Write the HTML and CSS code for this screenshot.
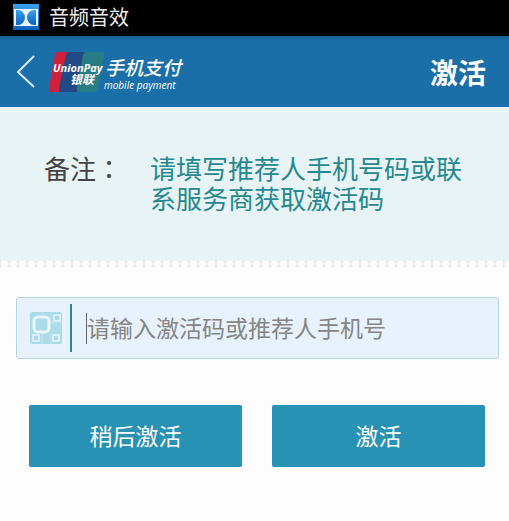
FILE: index.html
```html
<!DOCTYPE html>
<html lang="zh-CN">

<head>
    <meta charset="UTF-8" />
    <meta name="viewport" content="width=device-width, initial-scale=1.0" />
    <title>激活</title>
    <link rel="stylesheet" href="styles.css">
</head>

<body>
    <!-- 状态栏 -->
    <div class="status">
        <svg class="status-icon" viewBox="0 0 26 26" aria-hidden="true">
            <defs>
                <linearGradient id="blue" x1="0" y1="0" x2="0" y2="1">
                    <stop offset="0" stop-color="#3aa0f0" />
                    <stop offset="1" stop-color="#0a62bc" />
                </linearGradient>
            </defs>
            <rect width="26" height="26" fill="url(#blue)" />
            <rect x="1" y="5" width="24" height="17" fill="#e8f4ff" />
            <path d="M3 6h2a7 7.500 0 0 1 0 15H3z" fill="url(#blue)" />
            <path d="M23 6h-2a7 7.500 0 0 0 0 15h2z" fill="url(#blue)" />
        </svg>
        <span>音频音效</span>
    </div>

    <!-- 顶部导航 -->
    <header class="header">
        <a class="back" href="#" aria-label="返回">
            <svg viewBox="0 0 20 34" aria-hidden="true">
                <path d="M17 1L1 17l16 15" fill="none" stroke="#d9ecf8" stroke-width="2" />
            </svg>
        </a>
        <svg class="logo" viewBox="0 0 140 44" role="img" aria-label="UnionPay 银联 手机支付">
            <path d="M10 2h14l-8 40H3q-3 0-2-4L7 5q1-3 3-3z" fill="#d0203c" />
            <path d="M21 2h18l-8 40H13q-3 0-2-4l7-33q1-3 3-3z" fill="#234a86" />
            <path d="M38 2h16q3 0 2 4l-6 33q-1 3-3 3H31q-3 0-2-4l6-33q1-3 3-3z" fill="#277d84" />
            <text class="logo-en" x="5" y="22">UnionPay</text>
            <text class="logo-cn" x="22" y="34">银联</text>
            <text class="logo-name" x="57" y="25">手机支付</text>
            <text class="logo-sub" x="56" y="39">mobile payment</text>
        </svg>
        <h1 class="title">激活</h1>
    </header>

    <!-- 备注 -->
    <section class="notice">
        <span class="notice-label" lang="zh-TW">备注：</span>
        <p class="notice-text">请填写推荐人手机号码或联系服务商获取激活码</p>
    </section>
    <div class="lace"></div>

    <form class="form">
        <label class="field">
            <svg class="field-icon" viewBox="0 0 32 32" aria-hidden="true">
                <rect width="32" height="32" rx="2" fill="#aadbe9" />
                <g fill="none" stroke="#e8f5fc">
                    <rect x="4" y="5" width="15" height="15" rx="4" stroke-width="3" />
                    <rect x="24" y="3" width="6" height="6" stroke-width="1.500" />
                    <rect x="3" y="23" width="6" height="6" stroke-width="1.500" />
                    <rect x="23" y="23" width="6" height="6" stroke-width="1.500" />
                    <path d="M21 11h11M21 0v11M12 21v11M21 21v11" stroke-width="1" stroke-opacity=".4" />
                </g>
            </svg>
            <span class="field-line"></span>
            <span class="caret"></span>
            <input class="code" type="text" placeholder="请输入激活码或推荐人手机号" aria-label="激活码或推荐人手机号">
        </label>
        <div class="btns">
            <button class="btn" type="button">稍后激活</button>
            <button class="btn" type="submit">激活</button>
        </div>
    </form>
</body>

</html>
```
FILE: styles.css
```css
* {
    margin: 0;
    padding: 0;
    box-sizing: border-box;
}

body {
    background: #fdfdfd;
    font-family: "Noto Sans CJK SC", sans-serif;
}

svg {
    display: block;
}

.status {
    display: flex;
    align-items: center;
    gap: 10px;
    height: 36px;
    padding: 0 13px 2px;
    background: #000;
    color: #eee;
    font-size: 20px;
    line-height: 34px;
}

.status-icon {
    width: 26px;
    height: 26px;
}

.header {
    display: flex;
    align-items: center;
    height: 71px;
    padding: 0 23px 0 17px;
    background: linear-gradient(#18628f, #1b6fa8 4px);
    color: #fff;
}

.back svg {
    width: 20px;
    height: 34px;
}

.logo {
    width: 140px;
    height: 44px;
    margin-left: 11px;
    fill: #fff;
}

.logo-en {
    font: italic bold 11px "Open Sans", sans-serif;
}

.logo-cn {
    font: italic bold 12px "Noto Sans CJK SC", sans-serif;
}

.logo-name {
    font: italic 500 19px "Noto Sans CJK SC", sans-serif;
}

.logo-sub {
    font: italic 10px "Open Sans", sans-serif;
}

.title {
    margin-left: auto;
    font-size: 28px;
    line-height: 40px;
}

.notice {
    display: flex;
    height: 154px;
    padding: 46px 44px;
    background: #e7f3f4;
    font-size: 26px;
    line-height: 30px;
}

/* 繁体字形的冒号居中 */
.notice-label {
    flex: none;
    width: 106px;
    color: #444;
    font-family: "Noto Sans CJK TC", sans-serif;
}

.notice-text {
    color: #26898f;
}

/* 分隔花边 */
.lace {
    height: 6px;
    background: radial-gradient(circle, #fdfdfd 3px, #e2e2e2 5px) 0 0 / 9px 6px;
}

.form {
    padding: 30px 10px 30px 16px;
}

.field {
    display: flex;
    align-items: center;
    height: 62px;
    padding: 0 13px;
    border: 1px solid #b5d6e9;
    border-radius: 3px;
    background: #e8f2fc;
}

.field-icon {
    width: 32px;
    height: 32px;
}

.field-line {
    width: 2px;
    height: 48px;
    margin: 0 14px 0 8px;
    background: #238b95;
}

.caret {
    width: 1px;
    height: 31px;
    background: #666;
}

.code {
    flex: 1;
    min-width: 0;
    height: 40px;
    padding-bottom: 2px;
    border: none;
    outline: none;
    background: none;
    color: #444;
    font-family: inherit;
    font-size: 23px;
}

.code::placeholder {
    color: #858585;
}

.btns {
    display: flex;
    gap: 30px;
    padding: 46px 14px 0 13px;
}

.btn {
    flex: 1;
    height: 62px;
    padding-bottom: 2px;
    border: none;
    border-radius: 2px;
    background: #2792b4;
    color: #fff;
    font-family: inherit;
    font-size: 23px;
    cursor: pointer;
}
```
